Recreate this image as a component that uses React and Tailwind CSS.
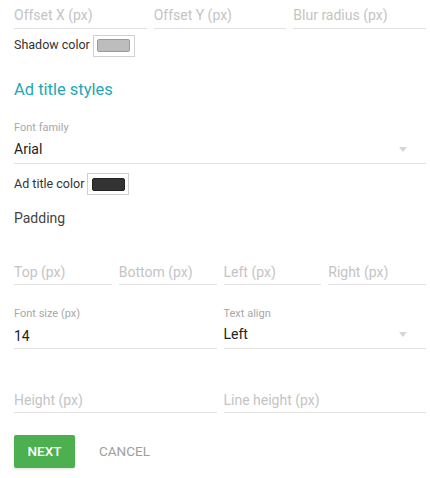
const font = { fontFamily: "Roboto, 'Noto Sans', sans-serif" };

function Field({ placeholder }) {
  return (
    <div className="border-b border-[#e0e0e0] pb-[2px] text-[14px] leading-[20px] text-[#c4c4c4]">
      {placeholder}
    </div>
  );
}

function Caret() {
  return (
    <svg width="8" height="5" viewBox="0 0 8 5" className="mr-[19px]">
      <path d="M0 0 L8 0 L4 5 Z" fill="#d6d6d6" />
    </svg>
  );
}

function Swatch({ color, border }) {
  return (
    <div className="flex h-[22px] w-[42px] items-center justify-center border border-[#d0d0d0] bg-white">
      <div
        className="h-[13px] w-[33px] rounded-[2px] border"
        style={{ backgroundColor: color, borderColor: border }}
      />
    </div>
  );
}

export default function App() {
  return (
    <div className="min-h-[478px] bg-white pl-[14px] pr-[4px] text-[#333]" style={font}>
      {/* shadow offsets */}
      <div className="grid grid-cols-3 gap-[7px] pt-[5px]">
        <div className="border-b border-[#e0e0e0] pb-[3px] text-[14px] leading-[20px] text-[#c4c4c4]">Offset X (px)</div>
        <div className="border-b border-[#e0e0e0] pb-[3px] text-[14px] leading-[20px] text-[#c4c4c4]">Offset Y (px)</div>
        <div className="border-b border-[#e0e0e0] pb-[3px] text-[14px] leading-[20px] text-[#c4c4c4]">Blur radius (px)</div>
      </div>

      <div className="mt-[5px] flex h-[23px] items-center gap-[3px]">
        <span className="text-[12.5px] text-[#333]">Shadow color</span>
        <Swatch color="#bdbdbd" border="#9a9a9a" />
      </div>

      <h2 className="mt-[21px] text-[16.5px] leading-[24px] text-[#26a6b4]">Ad title styles</h2>

      <div className="mt-[19px] text-[11px] leading-[14px] text-[#a8a8a8]">Font family</div>
      <div className="mt-[4px] flex items-center justify-between border-b border-[#e0e0e0] pb-[4px]">
        <span className="text-[14px] leading-[20px] text-[#222]">Arial</span>
        <Caret />
      </div>

      <div className="mt-[9px] flex h-[22px] items-center gap-[3px]">
        <span className="text-[12.5px] text-[#333]">Ad title color</span>
        <Swatch color="#333333" border="#222222" />
      </div>

      <div className="mt-[13px] text-[14px] leading-[20px] text-[#444]">Padding</div>

      <div className="mt-[34px] grid grid-cols-4 gap-[7px]">
        <Field placeholder="Top (px)" />
        <Field placeholder="Bottom (px)" />
        <Field placeholder="Left (px)" />
        <Field placeholder="Right (px)" />
      </div>

      <div className="mt-[22px] grid grid-cols-2 gap-[7px]">
        <div>
          <div className="text-[11px] leading-[14px] text-[#a8a8a8]">Font size (px)</div>
          <div className="mt-[5px] border-b border-[#e0e0e0] pb-[2px] text-[14px] leading-[20px] text-[#222]">14</div>
        </div>
        <div>
          <div className="text-[11px] leading-[14px] text-[#a8a8a8]">Text align</div>
          <div className="mt-[3px] flex items-center justify-between border-b border-[#e0e0e0] pb-[4px]">
            <span className="text-[14px] leading-[20px] text-[#222]">Left</span>
            <Caret />
          </div>
        </div>
      </div>

      <div className="mt-[41px] grid grid-cols-2 gap-[7px]">
        <Field placeholder="Height (px)" />
        <Field placeholder="Line height (px)" />
      </div>

      <div className="mt-[22px] flex items-center">
        <button className="h-[33px] w-[61px] rounded-[2px] bg-[#4caf50] text-[13.5px] font-medium text-white shadow-sm">
          NEXT
        </button>
        <button className="ml-[24px] text-[13.5px] text-[#9e9e9e]">CANCEL</button>
      </div>
    </div>
  );
}
